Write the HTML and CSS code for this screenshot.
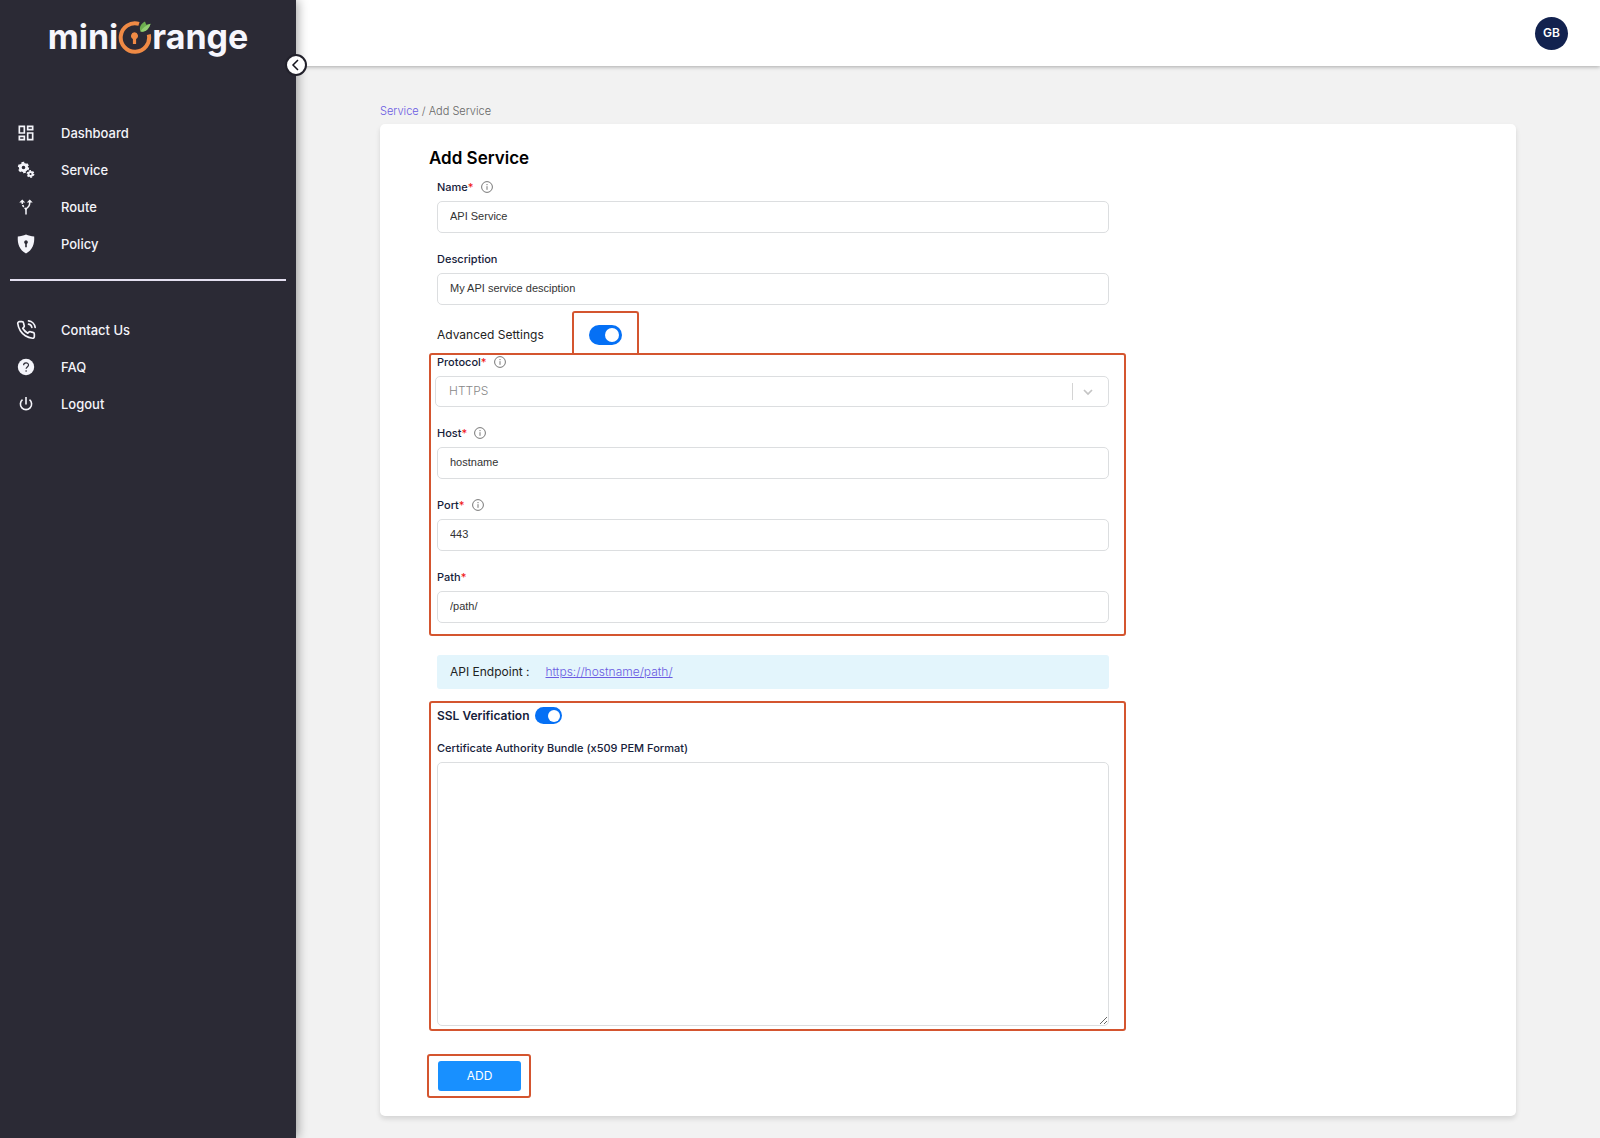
FILE: index.html
```html
<!DOCTYPE html>
<html lang="en">
<head>
<meta charset="utf-8">
<meta name="viewport" content="width=device-width, initial-scale=1">
<title>Add Service</title>
<link rel="stylesheet" href="styles.css">
</head>
<body>
<div class="app">
  <aside class="sidebar">
    <a class="logo" href="#" aria-label="miniOrange"><span>mini</span><svg class="logo-mark" viewBox="0 0 34 36" width="34" height="36" aria-hidden="true">
        <path d="M21 4.900A14.200 14.200 0 1 0 30.800 15.500" fill="none" stroke="#ef8a45" stroke-width="4"/>
        <path d="M22.500 12.500c-1.800-5 1-8 4.500-10l1.200 3.200 4.300-.9c-1.200 4.600-4.600 8.600-10 7.700z" fill="#6cae4f"/>
        <path d="M22.500 12.500c2-3.500 5-6 10-7.700-1.200 4.600-4.600 8.600-10 7.700z" fill="#93cf73"/>
        <path d="M16.500 13.300a3.500 3.500 0 0 0-1.600 6.600V25h3.200v-5.100a3.500 3.500 0 0 0-1.600-6.600z" fill="#ef8a45"/>
      </svg><span>range</span></a>
    <button class="collapse" type="button" aria-label="Collapse menu">
      <svg viewBox="0 0 18 18" width="18" height="18"><path d="M11 4 6 9l5 5" fill="none" stroke="#14141c" stroke-width="1.500"/></svg>
    </button>
    <nav class="nav">
      <a href="#"><svg viewBox="0 0 24 24" width="20" height="20" fill="currentColor"><path d="M19 5v2h-4V5h4M9 5v6H5V5h4m10 8v6h-4v-6h4M9 17v2H5v-2h4M21 3h-8v6h8V3zM11 3H3v10h8V3zm10 8h-8v10h8V11zm-10 4H3v6h8v-6z"/></svg>Dashboard</a>
      <a href="#"><svg viewBox="0 0 20 20" width="20" height="20" fill="none" stroke="currentColor"><circle cx="7.500" cy="7.500" r="3.200" stroke-width="2.800"/><circle cx="7.500" cy="7.500" r="4.800" stroke-width="1.800" stroke-dasharray="2.700 2.326"/><circle cx="14.500" cy="14" r="2" stroke-width="1.900"/><circle cx="14.500" cy="14" r="3.200" stroke-width="1.400" stroke-dasharray="1.800 1.551"/></svg>Service</a>
      <a href="#"><svg viewBox="0 0 24 24" width="18" height="18" fill="currentColor"><path d="M9.780 11.160l-1.420 1.420a7.282 7.282 0 0 1-1.790-2.940l1.940-.49c.32.89.77 1.500 1.270 2.010zM11 6L7 2 3 6h3.020c.02.81.08 1.540.19 2.170l1.940-.49C8.080 7.200 8.030 6.630 8.020 6H11zm10 0l-4-4-4 4h2.990c-.1 3.680-1.280 4.750-2.540 5.880-.5.44-1.010.92-1.450 1.550-.34-.49-.73-.88-1.130-1.240L9.460 13.600C10.390 14.450 11 15.140 11 17v5h2v-5c0-2.020.71-2.660 1.790-3.630 1.380-1.240 3.080-2.780 3.200-7.370H21z"/></svg>Route</a>
      <a href="#"><svg viewBox="0 0 20 20" width="20" height="20"><path d="M10 .5c2.500 1.200 5.200 1.800 8.200 2 .5 7.500-1.700 13.500-8.200 17C3.500 16 1.300 10 1.800 2.500c3-.2 5.700-.8 8.200-2z" fill="currentColor"/><path d="M10 6.300a1.900 1.900 0 0 0-.8 3.600v3.400h1.600V9.900a1.900 1.900 0 0 0-.8-3.600z" fill="#2b2a35"/></svg>Policy</a>
    </nav>
    <hr class="divider">
    <nav class="nav">
      <a href="#"><svg viewBox="0 0 24 24" width="20" height="20" fill="none" stroke="currentColor" stroke-width="2" stroke-linecap="round" stroke-linejoin="round"><path d="M15.050 5A5 5 0 0 1 19 8.950M15.050 1A9 9 0 0 1 23 8.940m-1 7.980v3a2 2 0 0 1-2.180 2 19.790 19.790 0 0 1-8.630-3.070 19.500 19.500 0 0 1-6-6 19.790 19.790 0 0 1-3.070-8.670A2 2 0 0 1 4.110 2h3a2 2 0 0 1 2 1.720 12.840 12.840 0 0 0 .7 2.810 2 2 0 0 1-.45 2.110L8.090 9.910a16 16 0 0 0 6 6l1.270-1.270a2 2 0 0 1 2.110-.45 12.840 12.840 0 0 0 2.810.7A2 2 0 0 1 22 16.920z"/></svg>Contact Us</a>
      <a href="#"><svg viewBox="0 0 20 20" width="20" height="20"><circle cx="10" cy="10" r="8.200" fill="currentColor"/><path d="M7.600 8.200c0-3.200 4.900-3.100 4.900-.2 0 1.900-2.400 2-2.400 3.800" fill="none" stroke="#2b2a35" stroke-width="1.200"/><circle cx="10.100" cy="14" r=".8" fill="#2b2a35"/></svg>FAQ</a>
      <a href="#"><svg viewBox="0 0 20 20" width="20" height="20" fill="none" stroke="currentColor" stroke-width="1.600"><path d="M10 3v7.500M6.500 5.700a5.600 5.600 0 1 0 7 0"/></svg>Logout</a>
    </nav>
  </aside>

  <div class="content">
    <header class="topbar"><button class="avatar" type="button">GB</button></header>
    <main class="main">
      <div class="crumbs"><a href="#">Service</a> / Add Service</div>
      <section class="card">
        <h1>Add Service</h1>
        <form class="form">
          <div class="group">
            <div class="field">
              <div class="label-row"><label for="name">Name<b>*</b></label><svg class="info" viewBox="0 0 12 12"><use href="#info"/></svg></div>
              <input id="name" type="text" value="API Service">
            </div>
            <div class="field">
              <div class="label-row"><label for="desc">Description</label></div>
              <input id="desc" type="text" value="My API service desciption">
            </div>
          </div>

          <div class="advanced">
            <label for="advanced">Advanced Settings</label>
            <div class="mark-tab"><input class="switch" id="advanced" type="checkbox" checked></div>
          </div>

          <div class="group marked settings">
            <div class="field">
              <div class="label-row"><label for="protocol">Protocol<b>*</b></label><svg class="info" viewBox="0 0 12 12"><use href="#info"/></svg></div>
              <div class="select">
                <select id="protocol"><option>HTTPS</option></select>
                <svg class="chevron" viewBox="0 0 12 12" width="12" height="12" aria-hidden="true"><path d="m2 4 4 4 4-4" fill="none" stroke="#c4c4c4" stroke-width="1.700"/></svg>
              </div>
            </div>
            <div class="field">
              <div class="label-row"><label for="host">Host<b>*</b></label><svg class="info" viewBox="0 0 12 12"><use href="#info"/></svg></div>
              <input id="host" type="text" value="hostname">
            </div>
            <div class="field">
              <div class="label-row"><label for="port">Port<b>*</b></label><svg class="info" viewBox="0 0 12 12"><use href="#info"/></svg></div>
              <input id="port" type="text" value="443">
            </div>
            <div class="field">
              <div class="label-row"><label for="path">Path<b>*</b></label></div>
              <input id="path" type="text" value="/path/">
            </div>
          </div>

          <div class="endpoint"><span>API Endpoint :</span><a href="#">https://hostname/path/</a></div>

          <div class="marked ssl">
            <div class="ssl-row"><label for="ssl">SSL Verification</label><input class="switch small" id="ssl" type="checkbox" checked></div>
            <div class="field">
              <div class="label-row"><label for="bundle">Certificate Authority Bundle (x509 PEM Format)</label></div>
              <textarea id="bundle"></textarea>
            </div>
          </div>

          <div class="submit"><button class="add" type="submit">ADD</button></div>
        </form>
      </section>
    </main>
  </div>
</div>
<svg class="defs" aria-hidden="true"><symbol id="info" viewBox="0 0 12 12"><circle cx="6" cy="6" r="5.400" fill="none" stroke="#777" stroke-width="1"/><path d="M6 5.200v3.600M6 3v1.200" stroke="#777" stroke-width="1"/></symbol></svg>
</body>
</html>
```
FILE: styles.css
```css
* { box-sizing: border-box; }

body {
  margin: 0;
  background: #f2f2f2;
  color: #16213a;
  font: 12px/16px Inter, "Liberation Sans", sans-serif;
}

a { color: #6a5be2; }
button, input, select, textarea { font: inherit; color: inherit; margin: 0; }
.defs { position: absolute; width: 0; height: 0; }

.app { display: flex; min-height: 100vh; }

/* Sidebar */
.sidebar {
  position: relative;
  z-index: 1;
  flex: 0 0 296px;
  background: #2b2a35;
  box-shadow: 2px 0 10px rgba(0, 0, 0, .35);
}
.logo {
  display: flex;
  justify-content: center;
  align-items: center;
  height: 74px;
  margin-bottom: 40px;
  color: #f6f6fd;
  font-size: 34px;
  font-weight: 700;
  line-height: 40px;
  text-decoration: none;
}
.collapse {
  position: absolute;
  top: 54px;
  right: -11px;
  display: flex;
  align-items: center;
  justify-content: center;
  width: 22px;
  height: 22px;
  padding: 0;
  border: 2px solid #22212b;
  border-radius: 50%;
  background: #fff;
}
.nav { display: flex; flex-direction: column; }
.nav a {
  display: grid;
  grid-template-columns: 20px 1fr;
  gap: 25px;
  align-items: center;
  height: 37px;
  padding-left: 16px;
  color: #f4f4fa;
  font-size: 13px;
  font-weight: 500;
  text-decoration: none;
}
.nav svg { justify-self: center; }
.divider {
  height: 2px;
  margin: 17px 10px 30px;
  border: 0;
  background: #e4dff0;
}

/* Page */
.content { flex: 1; min-width: 0; }
.topbar {
  display: flex;
  align-items: center;
  justify-content: flex-end;
  height: 66px;
  padding: 0 32px;
  background: #fff;
  box-shadow: 0 1px 4px rgba(0, 0, 0, .3);
}
.avatar {
  width: 33px;
  height: 33px;
  padding: 0;
  border: 0;
  border-radius: 50%;
  background: #12224f;
  color: #fff;
  font-size: 12px;
  font-weight: 600;
}
.main { padding: 37px 84px 21px; }
.crumbs { margin-bottom: 5px; color: #666; font-size: 11px; font-weight: 300; }
.crumbs a { text-decoration: none; }
.card {
  padding: 22px 49px 18px;
  border-radius: 5px;
  background: #fff;
  box-shadow: 0 3px 5px rgba(0, 0, 0, .12);
}
.card h1 {
  margin: 0 0 10px;
  color: #000;
  font-size: 17px;
  font-weight: 600;
  line-height: 24px;
}

/* Form */
.form { max-width: 697px; }
.group { display: flex; flex-direction: column; gap: 19px; padding: 0 17px 0 8px; }
.field { display: flex; flex-direction: column; gap: 7px; }
.label-row {
  display: flex;
  align-items: center;
  gap: 7px;
  height: 14px;
  font-size: 11px;
  font-weight: 500;
  line-height: 14px;
}
.label-row b { color: #f01818; font-weight: 500; }
.info { width: 12px; height: 12px; }
.field > input, .select select, textarea {
  width: 100%;
  border: 1px solid #dcdee0;
  border-radius: 5px;
  background: #fff;
  color: #333;
  font-family: "Liberation Sans", Arial, sans-serif;
  font-size: 11px;
}
.field > input { height: 32px; padding: 0 12px 2px; }
.select { position: relative; margin-left: -2px; }
.select select {
  display: block;
  height: 31px;
  padding: 0 48px 2px 13px;
  appearance: none;
  color: #888;
  font-family: Inter, "Liberation Sans", sans-serif;
  font-size: 12px;
  font-weight: 300;
}
.select::after {
  content: "";
  position: absolute;
  top: 7px;
  right: 36px;
  height: 17px;
  border-left: 1px solid #d4d4d4;
}
.chevron { position: absolute; top: 10px; right: 15px; }

.marked { border: 2px solid #d4552f; border-radius: 3px; }
.settings { padding: 0 15px 11px 6px; }

.advanced { display: flex; align-items: flex-end; margin-top: 6px; padding-left: 8px; }
.advanced label { width: 135px; padding-bottom: 10px; color: #222; }
.mark-tab {
  display: flex;
  align-items: center;
  justify-content: center;
  width: 67px;
  height: 42px;
  padding-top: 4px;
  border: 2px solid #d4552f;
  border-bottom: 0;
  border-radius: 3px 3px 0 0;
}

.switch {
  display: flex;
  align-items: center;
  justify-content: flex-end;
  width: 33px;
  height: 20px;
  padding: 0 3px;
  appearance: none;
  border-radius: 10px;
  background: #0570f5;
}
.switch::before { content: ""; width: 14px; height: 14px; border-radius: 50%; background: #fff; }
.switch.small { width: 27px; height: 17px; padding: 0 2px; }
.switch.small::before { width: 12px; height: 12px; }

.endpoint {
  display: flex;
  align-items: center;
  gap: 16px;
  height: 34px;
  margin: 19px 17px 12px 8px;
  padding: 0 13px;
  border-radius: 3px;
  background: #e3f5fc;
  color: #222;
}
.endpoint a { font-weight: 300; }

.ssl { padding: 4px 15px 3px 6px; }
.ssl-row {
  display: flex;
  align-items: center;
  gap: 6px;
  height: 17px;
  margin-bottom: 17px;
  font-weight: 600;
}
textarea { display: block; height: 264px; resize: vertical; }

.submit {
  width: 104px;
  margin: 23px 0 0 -2px;
  padding: 5px 9px;
  border: 2px solid #d4552f;
  border-radius: 3px;
}
.add {
  display: block;
  width: 83px;
  height: 30px;
  padding: 0;
  border: 0;
  border-radius: 3px;
  background: #1890ff;
  color: #fff;
}
```
